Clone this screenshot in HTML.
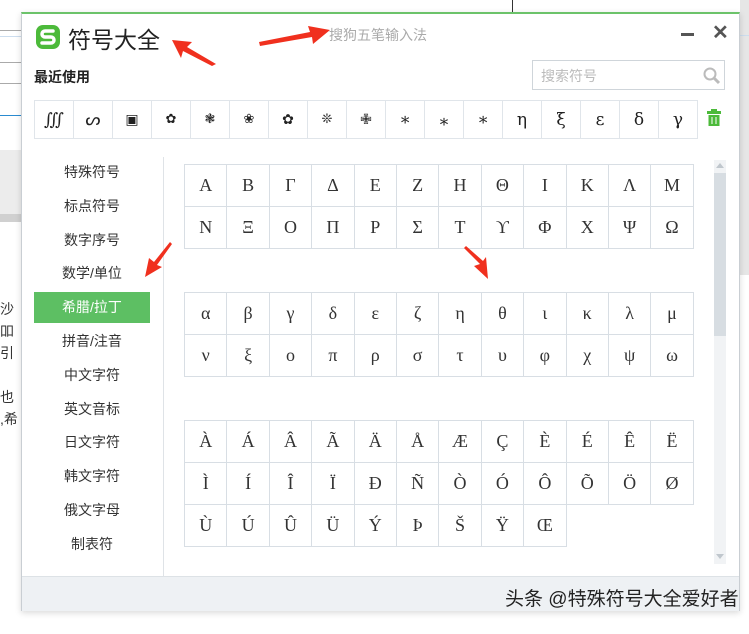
<!DOCTYPE html><html><head><meta charset="utf-8"><style>
body{margin:0;width:749px;height:634px;position:relative;overflow:hidden;background:#fff;font-family:"Liberation Sans","Noto Sans CJK SC",sans-serif}
.a{position:absolute}
.win{left:21px;top:12px;width:717px;height:596px;border:1px solid #c9ced3;border-top:2px solid #6cc36a;background:#fff;box-shadow:0 2px 6px rgba(0,0,0,.15)}
.g{border-collapse:collapse;position:absolute}
.g td{width:41.4px;height:41px;border:1px solid #d8dee4;text-align:center;font-family:"Liberation Serif","DejaVu Serif",serif;font-size:18px;color:#333;padding:0}
.r td{width:38px;height:37px;border:1px solid #e0e5ea;text-align:center;font-size:17px;color:#222;padding:0;font-family:"DejaVu Serif",serif}
.m{position:absolute;left:34px;width:116px;text-align:center;font-size:14px;color:#333;line-height:31px}
</style></head><body>
<div class="a" style="left:0;top:30px;width:21px;height:1px;background:#aaa"></div>
<div class="a" style="left:0;top:36px;width:21px;height:1px;background:#cde"></div>
<div class="a" style="left:0;top:62px;width:21px;height:1px;background:#aaa"></div>
<div class="a" style="left:0;top:83px;width:21px;height:1px;background:#aaa"></div>
<div class="a" style="left:0;top:115px;width:21px;height:1px;background:#2a8bd0"></div>
<div class="a" style="left:0;top:150px;width:21px;height:68px;background:#ececec"></div>
<div class="a" style="left:0;top:214px;width:21px;height:8px;background:#d0d0d0"></div>
<div class="a" style="left:740px;top:0;width:9px;height:275px;background:#e6e6e6"></div>
<div class="a" style="left:740px;top:35px;width:9px;height:1px;background:#cde"></div>
<div class="a" style="left:512px;top:0;width:1px;height:12px;background:#333"></div>
<div class="a" style="left:0;top:298px;font-size:14px;color:#333;line-height:22px">沙<br>吅<br>引<br><br>也<br>,希</div>

<div class="a win">
 <svg class="a" style="left:13px;top:10px" width="26" height="26" viewBox="0 0 26 26"><rect x="1" y="1" width="24" height="24" rx="7" fill="#4cba3a"/><path d="M18 7H10a3 3 0 0 0 0 6h6a3 3 0 0 1 0 6H7" stroke="#fff" stroke-width="3.5" fill="none" stroke-linecap="round"/></svg>
 <div class="a" style="left:46px;top:7px;font-size:23px;color:#222">符号大全</div>
 <div class="a" style="left:307px;top:11px;font-size:14px;color:#aaa">搜狗五笔输入法</div>
 <div class="a" style="left:659px;top:19px;width:13px;height:3px;background:#555"></div>
 <div class="a" style="left:690px;top:6px;font-size:20px;color:#555;font-weight:bold">✕</div>
 <div class="a" style="left:12px;top:53px;font-size:14px;font-weight:bold;color:#222">最近使用</div>
 <div class="a" style="left:510px;top:46px;width:193px;height:30px;border:1px solid #cfd5da;box-sizing:border-box"><span class="a" style="left:8px;top:5px;font-size:14px;color:#bbb">搜索符号</span>
 <svg class="a" style="left:170px;top:6px" width="18" height="18"><circle cx="7" cy="7" r="5.5" stroke="#bbb" stroke-width="2" fill="none"/><path d="M11 11l5 5" stroke="#bbb" stroke-width="3"/></svg></div>
 <table class="g r" style="left:12px;top:86px"><tr><td>∭</td><td>ᔕ</td><td style="font-size:14px">▣</td><td style="font-size:13px">✿</td><td style="font-size:13px">❃</td><td style="font-size:13px">❀</td><td style="font-size:14px">✿</td><td style="font-size:13px">❊</td><td style="font-size:14px">✙</td><td>∗</td><td>⁎</td><td>∗</td><td>η</td><td>ξ</td><td>ε</td><td>δ</td><td>γ</td></tr></table>
 <svg class="a" style="left:685px;top:95px" width="14" height="17"><rect x="0" y="2" width="14" height="3" fill="#4cba3a"/><rect x="4" y="0" width="6" height="3" fill="#4cba3a"/><rect x="1.5" y="6" width="11" height="11" fill="#4cba3a"/><path d="M5 8v7M9 8v7" stroke="#fff"/></svg>
 <div class="a" style="left:141px;top:143px;width:1px;height:420px;background:#dfe3e7"></div>
 <div class="a" style="left:0;top:562px;width:717px;height:34px;background:#eef1f4;border-top:1px solid #dde2e6"></div>
 <div class="a" style="left:483px;top:570px;font-size:19px;color:#222">头条 @特殊符号大全爱好者</div>
 <div class="a" style="left:692px;top:146px;width:12px;height:404px;background:#f1f3f5"></div>
 <div class="a" style="left:692px;top:159px;width:12px;height:163px;background:#d7dde2"></div>
 <div class="a" style="left:694px;top:149px;width:0;height:0;border:4px solid transparent;border-bottom:5px solid #c0c7cd;border-top:0"></div>
 <div class="a" style="left:694px;top:540px;width:0;height:0;border:4px solid transparent;border-top:5px solid #c0c7cd;border-bottom:0"></div>
</div>

<div class="m" style="top:157px">特殊符号</div>
<div class="m" style="top:191px">标点符号</div>
<div class="m" style="top:225px">数字序号</div>
<div class="m" style="top:258px">数学/单位</div>
<div class="m" style="top:292px;background:#5dbf63;color:#fff">希腊/拉丁</div>
<div class="m" style="top:326px">拼音/注音</div>
<div class="m" style="top:360px">中文字符</div>
<div class="m" style="top:394px">英文音标</div>
<div class="m" style="top:427px">日文字符</div>
<div class="m" style="top:461px">韩文字符</div>
<div class="m" style="top:495px">俄文字母</div>
<div class="m" style="top:529px">制表符</div>

<table class="g" style="left:184px;top:164px"><tr><td>Α</td><td>Β</td><td>Γ</td><td>Δ</td><td>Ε</td><td>Ζ</td><td>Η</td><td>Θ</td><td>Ι</td><td>Κ</td><td>Λ</td><td>Μ</td></tr><tr><td>Ν</td><td>Ξ</td><td>Ο</td><td>Π</td><td>Ρ</td><td>Σ</td><td>Τ</td><td>ϒ</td><td>Φ</td><td>Χ</td><td>Ψ</td><td>Ω</td></tr></table>
<table class="g" style="left:184px;top:292px"><tr><td>α</td><td>β</td><td>γ</td><td>δ</td><td>ε</td><td>ζ</td><td>η</td><td>θ</td><td>ι</td><td>κ</td><td>λ</td><td>μ</td></tr><tr><td>ν</td><td>ξ</td><td>ο</td><td>π</td><td>ρ</td><td>σ</td><td>τ</td><td>υ</td><td>φ</td><td>χ</td><td>ψ</td><td>ω</td></tr></table>
<table class="g" style="left:184px;top:420px"><tr><td>À</td><td>Á</td><td>Â</td><td>Ã</td><td>Ä</td><td>Å</td><td>Æ</td><td>Ç</td><td>È</td><td>É</td><td>Ê</td><td>Ë</td></tr><tr><td>Ì</td><td>Í</td><td>Î</td><td>Ï</td><td>Ð</td><td>Ñ</td><td>Ò</td><td>Ó</td><td>Ô</td><td>Õ</td><td>Ö</td><td>Ø</td></tr><tr><td>Ù</td><td>Ú</td><td>Û</td><td>Ü</td><td>Ý</td><td>Þ</td><td>Š</td><td>Ÿ</td><td>Œ</td><td style="border:0"></td><td style="border:0"></td><td style="border:0"></td></tr></table>

<svg class="a" style="left:0;top:0" width="749" height="634">
<g fill="#f0301e">
<polygon points="172,40 192,42 187,47 216,64 212,66 183,51 181,58"/>
<polygon points="330,30 313,44 312,37 260,46 259,42 310,32 308,26"/>
<polygon points="145,277 149,258 154,262 170,242 172,244 157,265 162,267"/>
<polygon points="488,279 474,266 480,264 464,248 466,246 483,261 486,257"/>
</g></svg>
</body></html>
